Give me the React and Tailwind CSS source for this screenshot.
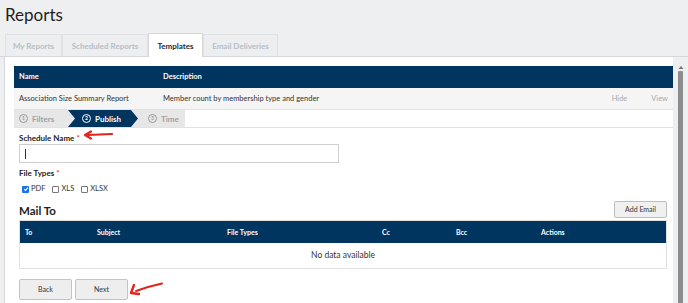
import React from "react";

const NAVY = "bg-[#00355f]";

const StepNum = ({ n, active }) => (
  <span
    className={`inline-flex items-center justify-center w-[9px] h-[9px] rounded-full border text-[5px] leading-none font-bold ${
      active ? "border-white text-white" : "border-[#9a9a9a] text-[#9a9a9a]"
    }`}
  >
    {n}
  </span>
);

const Check = ({ checked, label }) => (
  <label className="flex items-center gap-[2px]">
    {checked ? (
      <span className="w-[7px] h-[7px] rounded-[1px] bg-[#1a73e8] flex items-center justify-center">
        <svg width="6" height="6" viewBox="0 0 10 10">
          <path d="M2 5.2 L4.2 7.4 L8.2 2.6" fill="none" stroke="white" strokeWidth="1.8" />
        </svg>
      </span>
    ) : (
      <span className="w-[7px] h-[7px] rounded-[1px] border border-[#777] bg-white" />
    )}
    <span className="text-[7.5px] text-[#333]">{label}</span>
  </label>
);

const App = () => {
  const tabs = [
    ["My Reports", "w-[57px]"],
    ["Scheduled Reports", "w-[86px]"],
    ["Templates", "w-[55px]"],
    ["Email Deliveries", "w-[75px]"],
  ];
  const mailCols = [
    ["To", "w-[72px] pl-[5px]"],
    ["Subject", "w-[135px] pl-[5px]"],
    ["File Types", "w-[155px]"],
    ["Cc", "w-[74px]"],
    ["Bcc", "w-[85px]"],
    ["Actions", "flex-1"],
  ];

  return (
    <div className="relative w-[688px] h-[303px] overflow-hidden bg-[#eeeff1] font-['Lato',sans-serif] text-[#222]">
      <h1 className="pl-[5px] pt-[4px] text-[17px] leading-[22px] font-normal text-[#1e1e1e]">Reports</h1>

      {/* Tabs */}
      <div className="mt-[8px] pl-[5px] flex items-end h-[23px] border-b border-[#d6d8db]">
        {tabs.map(([t, w]) =>
          t === "Templates" ? (
            <div
              key={t}
              className={`${w} h-[24px] -mb-px flex items-center justify-center bg-white border border-b-0 border-[#d6d8db] text-[8px] font-bold text-[#1d2b3a]`}
            >
              {t}
            </div>
          ) : (
            <div
              key={t}
              className={`${w} h-[22px] flex items-center justify-center bg-[#eceef0] border border-b-0 border-[#dfe1e4] text-[8px] font-bold text-[#b6bec7]`}
            >
              {t}
            </div>
          )
        )}
      </div>

      {/* Body */}
      <div className="flex h-[246px]">
        <div className="ml-[4px] w-[669px] bg-white border-l border-[#d6d8db] pl-[9px] pt-[9px]">
          {/* Templates table */}
          <div className={`${NAVY} h-[22px] flex items-center text-[7.5px] font-bold text-white`}>
            <span className="pl-[5px] w-[149px]">Name</span>
            <span>Description</span>
          </div>
          <div className="h-[22px] flex items-center bg-[#f5f5f5] border-b border-[#e2e2e2] text-[7.5px] text-[#333]">
            <span className="pl-[5px] w-[149px]">Association Size Summary Report</span>
            <span className="flex-1">Member count by membership type and gender</span>
            <span className="text-[#aaa] mr-[24px]">Hide</span>
            <span className="text-[#aaa] mr-[5px]">View</span>
          </div>

          {/* Stepper */}
          <div className="h-[18px] border-b border-[#e2e2e2] flex">
            <div className="w-[171px] bg-[#e7e7e7] flex items-stretch">
              <div className="w-[54px] flex items-center gap-[4px] pl-[5px] text-[8px] font-bold text-[#a0a0a0]">
                <StepNum n="1" />
                Filters
              </div>
              <div className={`${NAVY} w-[70px] flex items-center gap-[4px] pl-[14px] text-[8px] font-bold text-white [clip-path:polygon(0_0,63px_0,70px_50%,63px_100%,0_100%,7px_50%)]`}>
                <StepNum n="2" active />
                Publish
              </div>
              <div className="flex items-center gap-[4px] pl-[10px] text-[8px] font-bold text-[#a0a0a0]">
                <StepNum n="3" />
                Time
              </div>
            </div>
          </div>

          {/* Form */}
          <div className="pl-[5px] pr-[6px]">
            <div className="mt-[5px] h-[10px] flex items-center text-[8px] font-bold text-[#222]">
              Schedule Name <span className="ml-[2px] text-[#e0443e]">*</span>
            </div>
            <div className="mt-[1px] w-[320px] h-[19px] border border-[#cfcfcf] flex items-center pl-[5px]">
              <span className="w-px h-[10px] bg-[#333]" />
            </div>
            <div className="mt-[5px] h-[10px] flex items-center text-[8px] font-bold text-[#222]">
              File Types <span className="ml-[2px] text-[#e0443e]">*</span>
            </div>
            <div className="mt-[6px] h-[10px] flex items-center gap-[7px] pl-[3px]">
              <Check checked label="PDF" />
              <Check label="XLS" />
              <Check label="XLSX" />
            </div>

            <div className="mt-[7px] h-[17px] flex items-end justify-between">
              <div className="text-[11.5px] font-bold text-[#222] leading-[14px]">Mail To</div>
              <button className="h-[17px] w-[53px] bg-[#f0f0f0] border border-[#bdbdbd] rounded-[2px] text-[7px] text-[#333]">
                Add Email
              </button>
            </div>

            <div className="mt-[2px] border border-[#e0e0e0]">
              <div className={`${NAVY} h-[22px] flex items-center text-[7px] font-bold text-white`}>
                {mailCols.map(([c, w]) => (
                  <span key={c} className={w}>
                    {c}
                  </span>
                ))}
              </div>
              <div className="h-[25px] flex items-center justify-center text-[8.5px] text-[#333]">
                No data available
              </div>
            </div>

            <div className="mt-[10px] flex gap-[3px]">
              <button className="w-[53px] h-[21px] bg-[#eeeeee] border border-[#c4c4c4] rounded-[2px] text-[7px] text-[#333]">
                Back
              </button>
              <button className="w-[53px] h-[21px] bg-[#eeeeee] border border-[#c4c4c4] rounded-[2px] text-[7px] text-[#333]">
                Next
              </button>
            </div>
          </div>
        </div>

        {/* Scrollbar */}
        <div className="w-[15px] flex flex-col items-center pt-[8px]">
          <svg width="6" height="5" viewBox="0 0 6 5">
            <path d="M3 1 L5.5 4 L0.5 4 Z" fill="#777" />
          </svg>
          <div className="mt-[1px] w-[5px] flex-1 bg-[#8c8c8c] rounded-t-[1px]" />
        </div>
      </div>

      {/* Annotation arrows */}
      <svg className="absolute left-0 top-0 pointer-events-none" width="688" height="303">
        <path d="M112 134 Q100 134.5 88 135" stroke="#e3231c" strokeWidth="2.2" fill="none" strokeLinecap="round" />
        <path d="M91 131.5 L85 135 L91 138.5" stroke="#e3231c" strokeWidth="2.2" fill="none" strokeLinecap="round" strokeLinejoin="round" />
        <path d="M162 283.5 Q150 286 136 291" stroke="#e3231c" strokeWidth="2" fill="none" strokeLinecap="round" />
        <path d="M134 285 L131 293 L139 294" stroke="#e3231c" strokeWidth="2.4" fill="none" strokeLinecap="round" strokeLinejoin="round" />
      </svg>
    </div>
  );
};

export default App;
